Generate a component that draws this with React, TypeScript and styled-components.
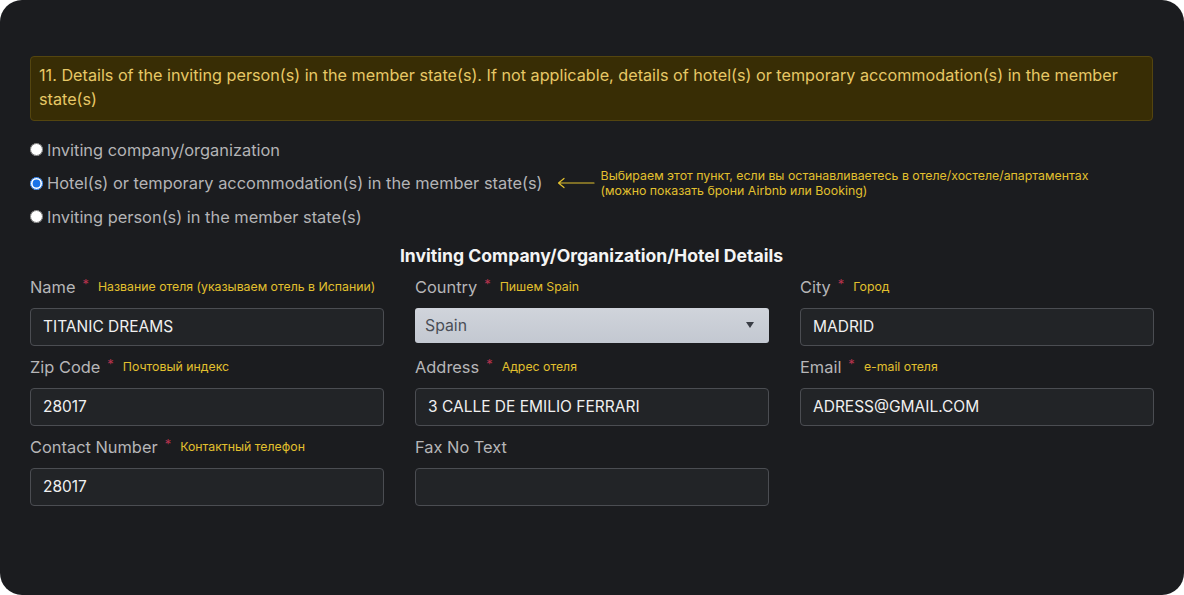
import React from "react";
import styled, { createGlobalStyle } from "styled-components";

const GlobalStyle = createGlobalStyle`
  html, body {
    margin: 0;
    padding: 0;
    background: #ffffff;
  }
  * {
    box-sizing: border-box;
  }
`;

const Card = styled.div`
  width: 1184px;
  height: 595px;
  background: #1b1c1f;
  border-radius: 22px;
  padding: 56px 31px 0 30px;
  font-family: Inter, "Noto Sans", sans-serif;
  overflow: hidden;
`;

const Banner = styled.div`
  background: #382d05;
  border: 1px solid #54450f;
  border-radius: 4px;
  padding: 6px 20px 9px 8px;
  color: #e7c866;
  font-size: 16.2px;
  line-height: 24px;
`;

const Options = styled.div`
  display: flex;
  flex-direction: column;
  margin-top: 12px;
`;

const OptionRow = styled.label`
  display: flex;
  align-items: center;
  height: 33.5px;
  gap: 4px;
  color: #b4b4b6;
  font-size: 16.4px;
`;

const Radio = styled.input`
  margin: 0;
  width: 13px;
  height: 13px;
  accent-color: #1a73e8;
`;

const Hint = styled.div`
  display: flex;
  align-items: center;
  margin-left: 10px;
  gap: 6px;
`;

const HintText = styled.div`
  color: #e2c02e;
  font-size: 12.35px;
  line-height: 15px;
`;

const Heading = styled.h2`
  margin: 10px 0 0;
  text-align: center;
  color: #f4f4f4;
  font-size: 17.6px;
  font-weight: 700;
  line-height: 24px;
`;

const Grid = styled.div`
  display: grid;
  grid-template-columns: repeat(3, 354px);
  column-gap: 31px;
  row-gap: 10px;
  margin-top: 8px;
`;

const Field = styled.div`
  display: flex;
  flex-direction: column;
  gap: 10px;
`;

const LabelRow = styled.div`
  display: flex;
  align-items: center;
  height: 22px;
`;

const Label = styled.span`
  color: #b6b6b8;
  font-size: 16.4px;
`;

const Req = styled.span`
  color: #b8334e;
  font-size: 13px;
  margin-left: 7px;
  position: relative;
  top: -3px;
`;

const Note = styled.span`
  color: #e2c02e;
  font-size: 12.3px;
  margin-left: 9px;
`;

const Input = styled.div`
  height: 38px;
  background: #222427;
  border: 1px solid #4b4d52;
  border-radius: 4px;
  display: flex;
  align-items: center;
  padding-left: 12px;
  color: #f0f0f0;
  font-size: 15.5px;
`;

const Select = styled.div`
  height: 35px;
  background: linear-gradient(#d0d4db, #c3c8d1);
  border-radius: 3px;
  display: flex;
  align-items: center;
  justify-content: space-between;
  padding: 0 15px 0 10px;
  color: #4a4e57;
  font-size: 15.8px;
`;

const Caret = styled.span`
  width: 0;
  height: 0;
  border-left: 4.5px solid transparent;
  border-right: 4.5px solid transparent;
  border-top: 6px solid #3a3e46;
`;

type FieldDef = {
  label: string;
  required?: boolean;
  note?: string;
  value?: string;
  select?: boolean;
};

const fields: FieldDef[] = [
  { label: "Name", required: true, note: "Название отеля (указываем отель в Испании)", value: "TITANIC DREAMS" },
  { label: "Country", required: true, note: "Пишем Spain", value: "Spain", select: true },
  { label: "City", required: true, note: "Город", value: "MADRID" },
  { label: "Zip Code", required: true, note: "Почтовый индекс", value: "28017" },
  { label: "Address", required: true, note: "Адрес отеля", value: "3 CALLE DE EMILIO FERRARI" },
  { label: "Email", required: true, note: "e-mail отеля", value: "ADRESS@GMAIL.COM" },
  { label: "Contact Number", required: true, note: "Контактный телефон", value: "28017" },
  { label: "Fax No Text", value: "" },
];

function Arrow() {
  return (
    <svg width="38" height="12" viewBox="0 0 38 12" fill="none">
      <path d="M37 6H2M7 1.5L1.5 6L7 10.5" stroke="#e2c02e" strokeWidth="1.2" strokeLinecap="round" strokeLinejoin="round" />
    </svg>
  );
}

export default function App() {
  return (
    <>
      <GlobalStyle />
      <Card>
        <Banner>
          11. Details of the inviting person(s) in the member state(s). If not applicable, details of hotel(s) or temporary accommodation(s) in the member state(s)
        </Banner>
        <Options>
          <OptionRow>
            <Radio type="radio" name="inv" readOnly />
            Inviting company/organization
          </OptionRow>
          <OptionRow>
            <Radio type="radio" name="inv" defaultChecked />
            Hotel(s) or temporary accommodation(s) in the member state(s)
            <Hint>
              <Arrow />
              <HintText>
                Выбираем этот пункт, если вы останавливаетесь в отеле/хостеле/апартаментах
                <br />
                (можно показать брони Airbnb или Booking)
              </HintText>
            </Hint>
          </OptionRow>
          <OptionRow>
            <Radio type="radio" name="inv" readOnly />
            Inviting person(s) in the member state(s)
          </OptionRow>
        </Options>
        <Heading>Inviting Company/Organization/Hotel Details</Heading>
        <Grid>
          {fields.map((f) => (
            <Field key={f.label}>
              <LabelRow>
                <Label>{f.label}</Label>
                {f.required && <Req>*</Req>}
                {f.note && <Note>{f.note}</Note>}
              </LabelRow>
              {f.select ? (
                <Select>
                  {f.value}
                  <Caret />
                </Select>
              ) : (
                <Input>{f.value}</Input>
              )}
            </Field>
          ))}
        </Grid>
      </Card>
    </>
  );
}
